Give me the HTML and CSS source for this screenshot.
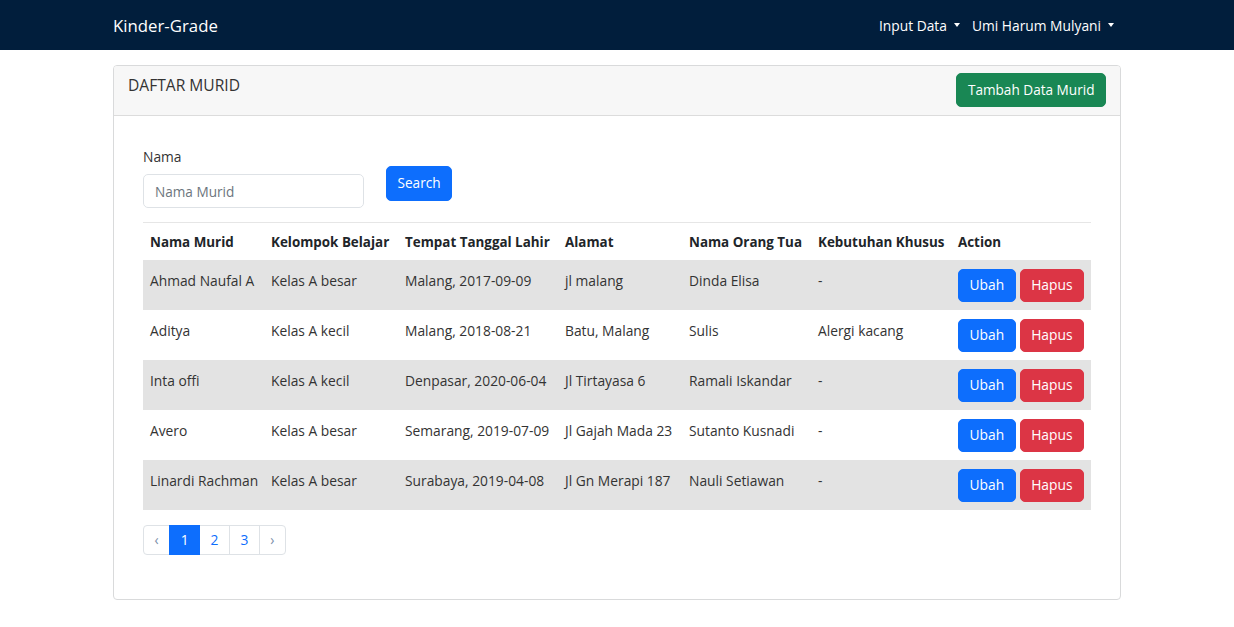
FILE: index.html
```html
<!DOCTYPE html>
<html lang="id">
<head>
<meta charset="utf-8">
<title>Kinder-Grade</title>
<link rel="stylesheet" href="styles.css">
</head>
<body>
<nav class="navbar">
  <div class="container nav-inner">
    <a class="brand" href="#">Kinder-Grade</a>
    <ul class="nav-menu">
      <li class="nav-item">Input Data <span class="caret"></span></li>
      <li class="nav-item">Umi Harum Mulyani <span class="caret"></span></li>
    </ul>
  </div>
</nav>

<main class="container">
  <section class="card">
    <header class="card-header">
      <span class="card-title">DAFTAR MURID</span>
      <button class="btn btn-success">Tambah Data Murid</button>
    </header>
    <div class="card-body">
      <form class="search-form">
        <div class="field">
          <label class="label" for="nama">Nama</label>
          <input id="nama" class="input" type="text" placeholder="Nama Murid">
        </div>
        <button type="button" class="btn btn-primary btn-search">Search</button>
      </form>
      <hr class="divider">
      <table class="table">
        <colgroup>
          <col class="c1"><col class="c2"><col class="c3"><col class="c4"><col class="c5"><col class="c6"><col class="c7">
        </colgroup>
        <thead>
          <tr>
            <th>Nama Murid</th><th>Kelompok Belajar</th><th>Tempat Tanggal Lahir</th><th>Alamat</th><th>Nama Orang Tua</th><th>Kebutuhan Khusus</th><th>Action</th>
          </tr>
        </thead>
        <tbody>
          <tr class="striped">
            <td>Ahmad Naufal A</td><td>Kelas A besar</td><td>Malang, 2017-09-09</td><td>jl malang</td><td>Dinda Elisa</td><td>-</td>
            <td class="actions"><button class="btn btn-primary">Ubah</button><button class="btn btn-danger">Hapus</button></td>
          </tr>
          <tr>
            <td>Aditya</td><td>Kelas A kecil</td><td>Malang, 2018-08-21</td><td>Batu, Malang</td><td>Sulis</td><td>Alergi kacang</td>
            <td class="actions"><button class="btn btn-primary">Ubah</button><button class="btn btn-danger">Hapus</button></td>
          </tr>
          <tr class="striped">
            <td>Inta offi</td><td>Kelas A kecil</td><td>Denpasar, 2020-06-04</td><td>Jl Tirtayasa 6</td><td>Ramali Iskandar</td><td>-</td>
            <td class="actions"><button class="btn btn-primary">Ubah</button><button class="btn btn-danger">Hapus</button></td>
          </tr>
          <tr>
            <td>Avero</td><td>Kelas A besar</td><td>Semarang, 2019-07-09</td><td>Jl Gajah Mada 23</td><td>Sutanto Kusnadi</td><td>-</td>
            <td class="actions"><button class="btn btn-primary">Ubah</button><button class="btn btn-danger">Hapus</button></td>
          </tr>
          <tr class="striped">
            <td>Linardi Rachman</td><td>Kelas A besar</td><td>Surabaya, 2019-04-08</td><td>Jl Gn Merapi 187</td><td>Nauli Setiawan</td><td>-</td>
            <td class="actions"><button class="btn btn-primary">Ubah</button><button class="btn btn-danger">Hapus</button></td>
          </tr>
        </tbody>
      </table>
      <ul class="pagination">
        <li class="page-item page-arrow">&lsaquo;</li>
        <li class="page-item active">1</li>
        <li class="page-item">2</li>
        <li class="page-item">3</li>
        <li class="page-item page-arrow">&rsaquo;</li>
      </ul>
    </div>
  </section>
</main>
</body>
</html>
```

FILE: styles.css
```css
* { box-sizing: border-box; }

body {
  margin: 0;
  font-family: "Open Sans", "Noto Sans", sans-serif;
  font-size: 13.8px;
  line-height: 21.6px;
  color: #212529;
  background: #fff;
}

.container {
  width: 1008px;
  margin: 0 auto;
}

/* navbar */
.navbar {
  background: #011e3c;
  height: 50px;
}
.nav-inner {
  height: 50px;
  display: flex;
  align-items: center;
  justify-content: space-between;
}
.brand {
  color: #fff;
  text-decoration: none;
  font-size: 16.8px;
  padding-top: 2px;
}
.nav-menu {
  list-style: none;
  margin: 0;
  padding: 2px 7px 0 0;
  display: flex;
  gap: 12px;
}
.nav-item {
  color: #fff;
  font-size: 13.8px;
  display: flex;
  align-items: center;
}
.caret {
  display: inline-block;
  margin-left: 7px;
  width: 0;
  height: 0;
  border-left: 3.5px solid transparent;
  border-right: 3.5px solid transparent;
  border-top: 4px solid #fff;
  margin-bottom: 2px;
}

/* card */
.card {
  margin-top: 15px;
  border: 1px solid #d9dadb;
  border-radius: 4px;
  overflow: hidden;
}
.card-header {
  background: #f7f7f7;
  border-bottom: 1px solid #dcdcdc;
  padding: 7px 14px 8px 14px;
  display: flex;
  justify-content: space-between;
  align-items: flex-start;
}
.card-title {
  line-height: 24px;
  color: #333;
  font-size: 15.6px;
}
.card-body {
  padding: 30px 29px 44px 29px;
}

/* buttons */
.btn {
  font-family: inherit;
  font-size: 13.6px;
  line-height: 21.6px;
  border: 1px solid transparent;
  border-radius: 5px;
  padding: 5px 10.5px;
  color: #fff;
  cursor: pointer;
}
.btn-success { background: #198754; border-color: #198754; }
.btn-primary { background: #0d6efd; border-color: #0d6efd; }
.btn-danger { background: #dc3545; border-color: #dc3545; }

/* search form */
.search-form {
  display: flex;
  align-items: flex-start;
  gap: 22px;
}
.field {
  display: flex;
  flex-direction: column;
}
.label {
  margin-bottom: 7px;
  color: #333;
}
.input {
  width: 221px;
  height: 34px;
  border: 1px solid #dee2e6;
  border-radius: 5px;
  padding: 5px 11px;
  font-family: inherit;
  font-size: 13.6px;
  color: #212529;
}
.input::placeholder { color: #6c757d; }
.btn-search {
  margin-top: 20px;
  height: 35px;
}

.divider {
  margin: 14px 0 0 0;
  border: 0;
  border-top: 1px solid #e6e6e6;
}

/* table */
.table {
  width: 948px;
  border-collapse: collapse;
  table-layout: fixed;
  color: #333;
}
.c1 { width: 121px; }
.c2 { width: 134px; }
.c3 { width: 160px; }
.c4 { width: 124px; }
.c5 { width: 129px; }
.c6 { width: 140px; }
.c7 { width: 140px; }
.table th {
  text-align: left;
  font-weight: 700;
  font-size: 13.4px;
  color: #212529;
  padding: 9px 7px 6px 7px;
  white-space: nowrap;
}
.table td {
  vertical-align: top;
  padding: 10px 7px 8px 7px;
  white-space: nowrap;
  height: 50px;
}
.table tr.striped td { background: #e3e3e3; }
.table td.actions {
  display: flex;
  gap: 4px;
  padding-top: 9px;
}
.table td.actions .btn {
  height: 33px;
  padding: 4px 10.5px;
  font-size: 13.8px;
}

/* pagination */
.pagination {
  list-style: none;
  margin: 15px 0 0 0;
  padding: 0;
  display: flex;
}
.page-item {
  height: 30px;
  line-height: 28px;
  padding: 0 10.5px;
  border: 1px solid #dee2e6;
  margin-left: -1px;
  color: #0d6efd;
  font-size: 13.8px;
}
.page-item:first-child { margin-left: 0; border-radius: 4px 0 0 4px; }
.page-item:last-child { border-radius: 0 4px 4px 0; }
.page-item.active {
  background: #0d6efd;
  border-color: #0d6efd;
  color: #fff;
  position: relative;
}
.page-arrow { color: #7a8ea8; padding: 0 10.5px; }
```
